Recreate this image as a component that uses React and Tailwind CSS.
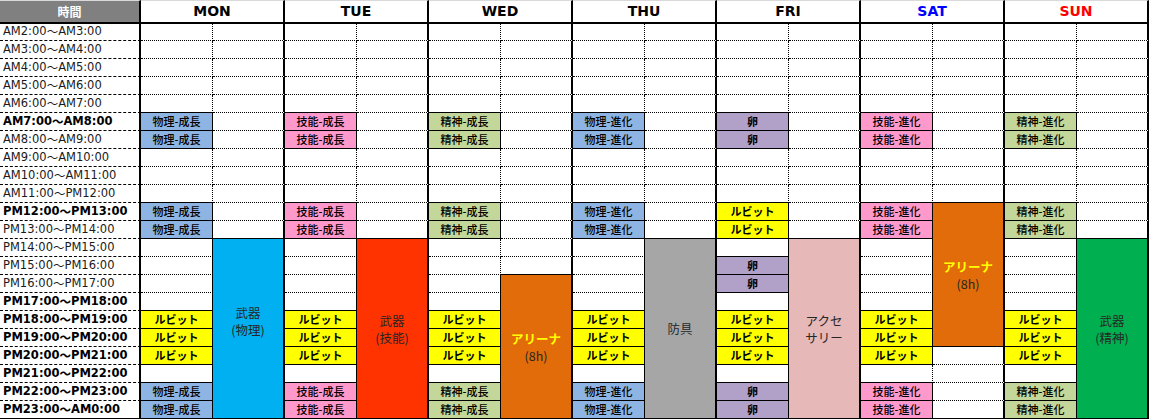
import React from 'react'

// 時間帯（太字は重要な時間）
const TIMES = [
  ['AM2:00', 'AM3:00', false],
  ['AM3:00', 'AM4:00', false],
  ['AM4:00', 'AM5:00', false],
  ['AM5:00', 'AM6:00', false],
  ['AM6:00', 'AM7:00', false],
  ['AM7:00', 'AM8:00', true],
  ['AM8:00', 'AM9:00', false],
  ['AM9:00', 'AM10:00', false],
  ['AM10:00', 'AM11:00', false],
  ['AM11:00', 'PM12:00', false],
  ['PM12:00', 'PM13:00', true],
  ['PM13:00', 'PM14:00', false],
  ['PM14:00', 'PM15:00', false],
  ['PM15:00', 'PM16:00', false],
  ['PM16:00', 'PM17:00', false],
  ['PM17:00', 'PM18:00', true],
  ['PM18:00', 'PM19:00', true],
  ['PM19:00', 'PM20:00', true],
  ['PM20:00', 'PM21:00', true],
  ['PM21:00', 'PM22:00', true],
  ['PM22:00', 'PM23:00', true],
  ['PM23:00', 'AM0:00', true],
]

const BLUE = 'bg-[#8db4e2]'
const PINK = 'bg-[#ff99cc]'
const GREEN = 'bg-[#c4d79b]'
const YELLOW = 'bg-[#ffff00]'
const PURPLE = 'bg-[#b1a0c7]'

const RUBIT = { label: 'ルビット', bg: YELLOW, bold: true }
const EGG = { label: '卵', bg: PURPLE, bold: true }

// 標準パターン: 7-9時, 12-14時, 22-24時 + ルビット 18-21時
const standard = (label, bg) => {
  const arr = Array(22).fill(null)
  ;[5, 6, 10, 11, 20, 21].forEach((r) => (arr[r] = { label, bg }))
  ;[16, 17, 18].forEach((r) => (arr[r] = RUBIT))
  return arr
}

const friday = () => {
  const arr = Array(22).fill(null)
  ;[5, 6, 13, 14, 20, 21].forEach((r) => (arr[r] = EGG))
  ;[10, 11, 16, 17, 18].forEach((r) => (arr[r] = RUBIT))
  return arr
}

const ARENA = { lines: ['アリーナ', '(8h)'], bg: 'bg-[#e26b0a]', arena: true }

const DAYS = [
  { name: 'MON', color: 'text-black', a: standard('物理-成長', BLUE), block: { start: 12, span: 'row-span-10', lines: ['武器', '(物理)'], bg: 'bg-[#00b0f0]', extra: 'pb-[16px]' } },
  { name: 'TUE', color: 'text-black', a: standard('技能-成長', PINK), block: { start: 12, span: 'row-span-10', lines: ['武器', '(技能)'], bg: 'bg-[#ff3300]' } },
  { name: 'WED', color: 'text-black', a: standard('精神-成長', GREEN), block: { start: 14, span: 'row-span-8', ...ARENA } },
  { name: 'THU', color: 'text-black', a: standard('物理-進化', BLUE), block: { start: 12, span: 'row-span-10', lines: ['防具'], bg: 'bg-[#a6a6a6]' } },
  { name: 'FRI', color: 'text-black', a: friday(), block: { start: 12, span: 'row-span-10', lines: ['アクセ', 'サリー'], bg: 'bg-[#e6b8b7]' } },
  { name: 'SAT', color: 'text-[#0000ff]', a: standard('技能-進化', PINK), block: { start: 10, span: 'row-span-8', ...ARENA } },
  { name: 'SUN', color: 'text-[#ff0000]', a: standard('精神-進化', GREEN), block: { start: 12, span: 'row-span-10', lines: ['武器', '(精神)'], bg: 'bg-[#00b050]' } },
]

const BLOCK_LEN = { 'row-span-10': 10, 'row-span-8': 8 }

const R_THICK = '[border-right:2px_solid_#000]'
const R_DOT = '[border-right:1px_dotted_#000]'
const R_SOLID = '[border-right:1px_solid_#000]'
const B_DOT = '[border-bottom:1px_dotted_#000]'
const B_SOLID = '[border-bottom:1px_solid_#000]'
const B_DASH = '[border-bottom:1px_dashed_#000]'

const CJK = "[font-family:'Noto_Sans_CJK_JP',sans-serif]"
const LATIN = "[font-family:'DejaVu_Sans','Noto_Sans_CJK_JP',sans-serif]"

const covers = (block, r) => r >= block.start && r < block.start + BLOCK_LEN[block.span]

const App = () => {
  const cells = []

  // ヘッダー
  cells.push(
    <div key="h-time" className={`bg-[#808080] ${R_THICK} [border-bottom:2px_solid_#000] [border-top:1px_solid_#d9d9d9] flex items-center justify-center text-white font-bold text-[12px] ${CJK}`}>
      時間
    </div>
  )
  DAYS.forEach((d) => {
    cells.push(
      <div key={`h-${d.name}`} className={`col-span-2 bg-white ${R_THICK} [border-bottom:2px_solid_#000] [border-top:1px_solid_#d9d9d9] flex items-center justify-center font-bold text-[14px] ${LATIN} ${d.color}`}>
        {d.name}
      </div>
    )
  })

  TIMES.forEach(([from, to, bold], r) => {
    const last = r === TIMES.length - 1
    cells.push(
      <div key={`t-${r}`} className={`${R_THICK} ${last ? B_SOLID : B_DASH} flex items-center pl-[3px] whitespace-nowrap text-[11.5px] leading-none ${LATIN} ${bold ? 'font-bold text-black' : 'text-[#1a1a1a]'}`}>
        {from}
        <span className={CJK}>～</span>
        {to}
      </div>
    )

    DAYS.forEach((d) => {
      const item = d.a[r]
      const below = r < 21 ? d.a[r + 1] : null
      const bColored = covers(d.block, r)
      const right = item || bColored ? R_SOLID : R_DOT
      const bottom = last || item || below ? B_SOLID : B_DOT
      cells.push(
        <div key={`a-${d.name}-${r}`} className={`${right} ${bottom} ${item ? item.bg : 'bg-white'} flex items-center justify-center text-[11px] leading-none text-black ${CJK} ${item && item.bold ? 'font-bold' : 'font-medium'}`}>
          {item ? item.label : null}
        </div>
      )

      const b = d.block
      if (r === b.start) {
        cells.push(
          <div key={`b-${d.name}`} className={`${b.span} ${b.bg} ${R_THICK} ${B_SOLID} flex flex-col items-center justify-center text-[12.5px] leading-[17px] ${CJK} ${b.extra || ''}`}>
            {b.lines.map((line, i) => (
              <span key={i} className={b.arena && i === 0 ? 'text-[#ffff00] font-bold' : 'text-[#262626]'}>
                {line}
              </span>
            ))}
          </div>
        )
      } else if (!bColored) {
        const belowB = r < 21 && covers(b, r + 1)
        cells.push(
          <div key={`b-${d.name}-${r}`} className={`${R_THICK} ${last || belowB ? B_SOLID : B_DOT} bg-white`} />
        )
      }
    })
  })

  return (
    <div className="w-[1149px] h-[419px] bg-white overflow-hidden">
      <div className="grid grid-cols-[141px_repeat(14,72px)] grid-rows-[24px_17px_repeat(21,18px)]">
        {cells}
      </div>
    </div>
  )
}

export default App
